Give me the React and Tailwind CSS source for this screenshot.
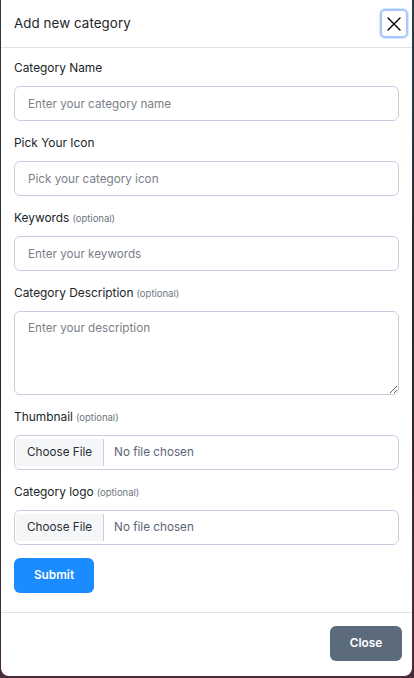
import React from "react";

const Label = ({ text, optional = false }) => (
  <label className="block h-[18px] mb-[9px] text-[11.9px] leading-[18px] font-normal text-[#212529]">
    {text}
    {optional && (
      <span className="ml-[3px] text-[9.5px] font-normal text-[#6c757d]">(optional)</span>
    )}
  </label>
);

const TextInput = ({ placeholder }) => (
  <input
    type="text"
    placeholder={placeholder}
    className="block w-full h-[35px] px-[13px] rounded-md border border-[#c9cddf] bg-white text-[11.7px] text-gray-800 placeholder:text-[#7b8088] outline-none"
  />
);

const FileInput = () => (
  <div className="flex items-center w-full h-[35px] rounded-md border border-[#c9cddf] bg-white overflow-hidden">
    <div className="h-full flex items-center py-[3px] pl-[1px]">
      <div className="h-full flex items-center px-[11px] bg-[#f5f6f8] border-r border-[#c9cddf] text-[11.7px] text-[#2b2f33]">
        Choose File
      </div>
    </div>
    <span className="ml-[10px] text-[11.7px] text-[#5c6478]">No file chosen</span>
  </div>
);

const Field = ({ label, optional, children }) => (
  <div className="mb-[13px]">
    <Label text={label} optional={optional} />
    {children}
  </div>
);

export default function App() {
  return (
    <div
      className="w-[414px] h-[678px] overflow-hidden bg-gradient-to-b from-[#2d3a40] via-[#2a2a2e] to-[#4a2a38] px-[1px]"
      style={{ fontFamily: "Inter, 'Noto Sans', sans-serif" }}
    >
      <div className="w-[411px] h-[676px] bg-white rounded-b-lg flex flex-col">
        {/* header */}
        <div className="h-[48px] flex items-center justify-between pl-[13px] pr-[4px] border-b border-[#dee2e6]">
          <h5 className="text-[13.3px] text-[#212529] tracking-[0.1px]">Add new category</h5>
          <button className="w-[28px] h-[29px] flex items-center justify-center rounded-[5px] border-2 border-[#a8c8fb] shadow-[0_0_0_1px_#d6e6fe]">
            <svg width="16" height="16" viewBox="0 0 16 16" fill="none" stroke="#000" strokeWidth="1.4" strokeLinecap="round">
              <path d="M2 2 L14 14 M14 2 L2 14" />
            </svg>
          </button>
        </div>

        {/* body */}
        <div className="px-[13px] pt-[11px] border-b border-[#dee2e6] pb-[19px]">
          <Field label="Category Name">
            <TextInput placeholder="Enter your category name" />
          </Field>
          <Field label="Pick Your Icon">
            <TextInput placeholder="Pick your category icon" />
          </Field>
          <Field label="Keywords" optional>
            <TextInput placeholder="Enter your keywords" />
          </Field>
          <Field label="Category Description" optional>
            <textarea
              placeholder="Enter your description"
              className="block w-full h-[84px] px-[13px] py-[8px] rounded-md border border-[#c9cddf] bg-white text-[11.7px] text-gray-800 placeholder:text-[#7b8088] outline-none"
            />
          </Field>
          <Field label="Thumbnail" optional>
            <FileInput />
          </Field>
          <Field label="Category logo" optional>
            <FileInput />
          </Field>
          <button className="w-[80px] h-[35px] rounded-md bg-[#1b8cff] text-white text-[11.8px] font-semibold">
            Submit
          </button>
        </div>

        {/* footer */}
        <div className="flex justify-end px-[10px] pt-[13px]">
          <button className="w-[72px] h-[35px] rounded-md bg-[#5c6b7b] text-white text-[11.8px] font-semibold">
            Close
          </button>
        </div>
      </div>
    </div>
  );
}
